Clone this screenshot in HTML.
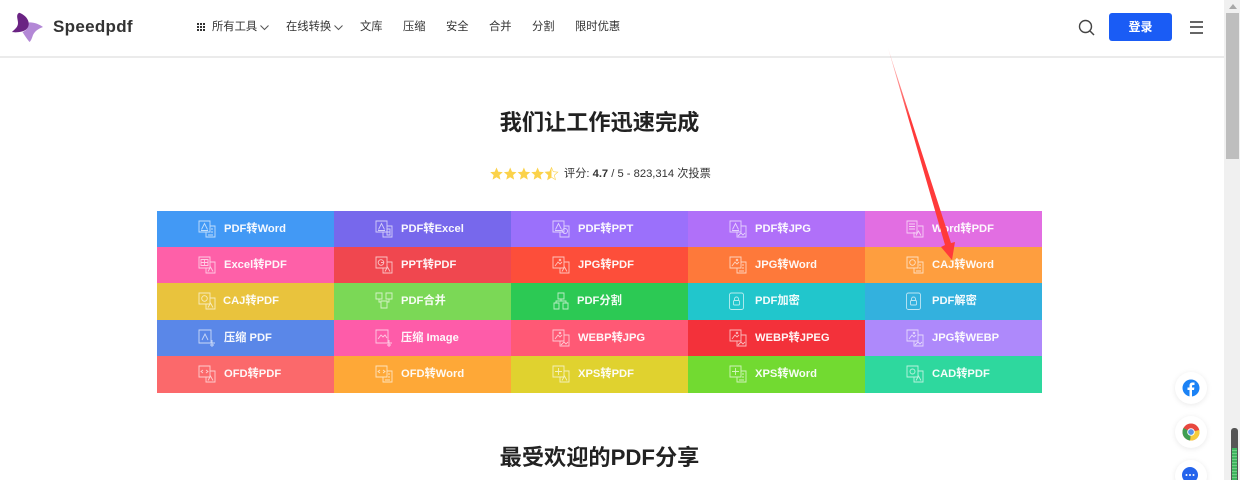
<!DOCTYPE html>
<html lang="zh"><head><meta charset="utf-8"><title>Speedpdf</title>
<style>
html,body{margin:0;padding:0;width:1240px;height:480px;overflow:hidden;background:#fff}
body{position:relative;font-family:"Liberation Sans","Noto Sans CJK SC",sans-serif;color:#333}
.a{position:absolute;white-space:nowrap}
.nav{top:20px;font-size:11.3px;line-height:14px;color:#333}
.c{position:absolute;width:177px;height:37px;color:#fff}
.c span{position:absolute;left:67px;top:11px;font-size:11.2px;font-weight:bold;line-height:15px;white-space:nowrap;opacity:.95}
.c svg{position:absolute;left:41px;top:9px;width:18px;height:18px;fill:none;stroke:#fff;stroke-width:.9;opacity:.68}
h2{position:absolute;margin:0;left:0;width:1199px;text-align:center;font-size:22.2px;font-weight:bold;line-height:32px;color:#222}
.f{position:absolute;left:1175px;width:32px;height:32px;border-radius:50%;background:#fff;box-shadow:0 1px 6px rgba(0,0,0,.09)}
</style></head><body>

<svg class="a" style="left:0;top:0" width="50" height="50" viewBox="0 0 50 50">
<path d="M28.700 22.500C33 22 39 24 43 27C38 29 35 31 33 35C32 38 31 41 29.500 42C27 39 25 36 22.500 32C26 31 28.500 28 28.700 22.500Z" fill="#b388d6"/>
<path d="M19 12.700C24 14 29 19 28.800 24C28.500 28 26 30.500 22 31.500C18 32.500 14 32.500 12 32C15 29 18 27 18 23C18 19 15.500 15 19 12.700Z" fill="#6a2383"/>
</svg>
<div class="a" style="left:53px;top:16px;font-size:17px;line-height:21px;font-weight:bold;color:#333;letter-spacing:.3px">Speedpdf</div>

<svg class="a" style="left:197px;top:23px" width="8" height="8"><path d="M0 0h2v2H0zM3 0h2v2H3zM6 0h2v2H6zM0 3h2v2H0zM3 3h2v2H3zM6 3h2v2H6zM0 6h2v2H0zM3 6h2v2H3zM6 6h2v2H6z" fill="#333"/></svg>
<div class="a nav" style="left:212px">所有工具</div>
<svg class="a" style="left:260px;top:25px" width="9" height="6"><path d="M.5.5L4.500 4.500L8.500.5" fill="none" stroke="#555"/></svg>
<div class="a nav" style="left:286px">在线转换</div>
<svg class="a" style="left:334px;top:25px" width="9" height="6"><path d="M.5.5L4.500 4.500L8.500.5" fill="none" stroke="#555"/></svg>
<div class="a nav" style="left:360px">文库</div>
<div class="a nav" style="left:403px">压缩</div>
<div class="a nav" style="left:446px">安全</div>
<div class="a nav" style="left:489px">合并</div>
<div class="a nav" style="left:532px">分割</div>
<div class="a nav" style="left:575px">限时优惠</div>

<svg class="a" style="left:1078px;top:19px" width="17" height="17" viewBox="0 0 17 17"><circle cx="7.500" cy="7.500" r="6" fill="none" stroke="#444" stroke-width="1.400"/><path d="M12 12L16 16" stroke="#444" stroke-width="1.500"/></svg>
<div class="a" style="left:1109px;top:13px;width:63px;height:28px;background:#1a5cf5;border-radius:3px;color:#fff;font-size:12px;font-weight:bold;line-height:28px;text-align:center">登录</div>
<div class="a" style="left:1190px;top:21px;width:13px;height:1.500px;background:#666"></div>
<div class="a" style="left:1190px;top:26px;width:13px;height:1.500px;background:#666"></div>
<div class="a" style="left:1190px;top:32px;width:13px;height:1.500px;background:#666"></div>
<div class="a" style="left:0;top:56px;width:1224px;height:2px;background:#ebebeb"></div>

<h2 style="top:107px">我们让工作迅速完成</h2>
<svg class="a" style="left:490px;top:167px" width="70" height="14" viewBox="0 0 70 14">
<defs><path id="st" d="M6.500 0.500L8.300 4.700L12.800 5.100L9.400 8.100L10.400 12.600L6.500 10.200L2.600 12.600L3.600 8.100L.2 5.100L4.700 4.700Z"/></defs>
<use href="#st" fill="#fbd24a"/><use href="#st" x="13.700" fill="#fbd24a"/><use href="#st" x="27.400" fill="#fbd24a"/><use href="#st" x="41.100" fill="#fbd24a"/>
<use href="#st" x="55" fill="#fff" stroke="#fbd24a" stroke-width=".6"/>
<path d="M61.500.5L59.700 4.700L55.200 5.100L58.600 8.100L57.600 12.600L61.500 10.200Z" fill="#fbd24a"/>
</svg>
<div class="a" style="left:564px;top:167px;font-size:11.200px;line-height:15px;color:#333">评分: <b>4.7</b> / 5 - 823,314 次投票</div>

<div class="c" style="left:157px;top:211px;background:#4299f5"><svg viewBox="0 0 18 18"><use href="#p"/><use href="#w"/></svg><span>PDF转Word</span></div>
<div class="c" style="left:334px;top:211px;background:#7768ec"><svg viewBox="0 0 18 18"><use href="#p"/><use href="#x"/></svg><span>PDF转Excel</span></div>
<div class="c" style="left:511px;top:211px;background:#9b70fb"><svg viewBox="0 0 18 18"><use href="#p"/><use href="#t"/></svg><span>PDF转PPT</span></div>
<div class="c" style="left:688px;top:211px;background:#b070f9"><svg viewBox="0 0 18 18"><use href="#p"/><use href="#m"/></svg><span>PDF转JPG</span></div>
<div class="c" style="left:865px;top:211px;background:#e26ee2"><svg viewBox="0 0 18 18"><use href="#l"/><use href="#a"/></svg><span>Word转PDF</span></div>

<div class="c" style="left:157px;top:247px;height:36px;background:#fe60a8"><svg viewBox="0 0 18 18"><use href="#b"/><path d="M3 3.500h7v6H3zM3 6.500h7M6.500 3.500v6"/><use href="#a"/></svg><span>Excel转PDF</span></div>
<div class="c" style="left:334px;top:247px;height:36px;background:#f0474f"><svg viewBox="0 0 18 18"><use href="#b"/><circle cx="6" cy="6.500" r="2.800"/><path d="M6 6.500h2.800"/><use href="#a"/></svg><span>PPT转PDF</span></div>
<div class="c" style="left:511px;top:247px;height:36px;background:#fd4e3a"><svg viewBox="0 0 18 18"><use href="#i"/><use href="#a"/></svg><span>JPG转PDF</span></div>
<div class="c" style="left:688px;top:247px;height:36px;background:#fe793a"><svg viewBox="0 0 18 18"><use href="#i"/><use href="#w"/></svg><span>JPG转Word</span></div>
<div class="c" style="left:865px;top:247px;height:36px;background:#fe9e3f"><svg viewBox="0 0 18 18"><use href="#b"/><circle cx="6.500" cy="6.500" r="2.800"/><use href="#w"/></svg><span>CAJ转Word</span></div>

<div class="c" style="left:157px;top:283px;background:#e9c33d"><svg viewBox="0 0 18 18"><use href="#b"/><circle cx="6.500" cy="6.500" r="2.800"/><use href="#a"/></svg><span style="left:66px">CAJ转PDF</span></div>
<div class="c" style="left:334px;top:283px;background:#7bd856"><svg viewBox="0 0 18 18"><path d="M1 1h6v6H1zM11 1h6v6h-6zM4 7v3h2M14 7v3h-2M6 9h6v7H6z"/></svg><span>PDF合并</span></div>
<div class="c" style="left:511px;top:283px;background:#2cc954"><svg viewBox="0 0 18 18"><path d="M6 1h6v6H6zM2 11h5v6H2zM11 11h5v6h-5zM4 11V9h10v2M9 7v2"/></svg><span style="left:66px">PDF分割</span></div>
<div class="c" style="left:688px;top:283px;background:#21c6cc"><svg viewBox="0 0 18 18"><use href="#k"/></svg><span>PDF加密</span></div>
<div class="c" style="left:865px;top:283px;background:#33b1de"><svg viewBox="0 0 18 18"><use href="#k"/></svg><span>PDF解密</span></div>

<div class="c" style="left:157px;top:320px;height:36px;background:#5a87e8"><svg viewBox="0 0 18 18"><path d="M1 1h12v13H1zM4 11l3-6 3 6M14 11v7M11 14h6M12 16h4"/></svg><span>压缩 PDF</span></div>
<div class="c" style="left:334px;top:320px;height:36px;background:#fe5ca9"><svg viewBox="0 0 18 18"><path d="M1 1h12v13H1zM3 10l3-4 2 2 2-2 2 3M14 11v7M11 14h6M12 16h4"/></svg><span>压缩 Image</span></div>
<div class="c" style="left:511px;top:320px;height:36px;background:#ff5975"><svg viewBox="0 0 18 18"><use href="#i"/><use href="#m"/></svg><span>WEBP转JPG</span></div>
<div class="c" style="left:688px;top:320px;height:36px;background:#f3313a"><svg viewBox="0 0 18 18"><use href="#i"/><use href="#m"/></svg><span>WEBP转JPEG</span></div>
<div class="c" style="left:865px;top:320px;height:36px;background:#ae89fb"><svg viewBox="0 0 18 18"><use href="#i"/><use href="#m"/></svg><span>JPG转WEBP</span></div>

<div class="c" style="left:157px;top:356px;background:#fb696b"><svg viewBox="0 0 18 18"><use href="#b"/><path d="M5 5L3 6.500L5 8M8 5L10 6.500L8 8"/><use href="#a"/></svg><span>OFD转PDF</span></div>
<div class="c" style="left:334px;top:356px;background:#fea837"><svg viewBox="0 0 18 18"><use href="#b"/><path d="M5 5L3 6.500L5 8M8 5L10 6.500L8 8"/><use href="#w"/></svg><span>OFD转Word</span></div>
<div class="c" style="left:511px;top:356px;background:#e0d22f"><svg viewBox="0 0 18 18"><use href="#b"/><path d="M6.500 3v7M3 6.500h7"/><use href="#a"/></svg><span>XPS转PDF</span></div>
<div class="c" style="left:688px;top:356px;background:#72da31"><svg viewBox="0 0 18 18"><use href="#b"/><path d="M6.500 3v7M3 6.500h7"/><use href="#w"/></svg><span>XPS转Word</span></div>
<div class="c" style="left:865px;top:356px;background:#2ed89e"><svg viewBox="0 0 18 18"><use href="#b"/><circle cx="6.500" cy="6.500" r="2.500"/><use href="#a"/></svg><span>CAD转PDF</span></div>

<svg width="0" height="0" style="position:absolute"><defs>
<g id="p"><path d="M1 1h11v11H1zM3.500 9.500l3-6 3 6M3 10.500h7"/></g>
<g id="l"><path d="M1 1h10v12H1zM3 4h6M3 6.500h6M3 9h6"/></g>
<g id="b"><path d="M1 1h11v11H1z"/></g>
<g id="i"><path d="M1 1h11v11H1zM3 10l3-4 2 2 2-2"/><circle cx="8" cy="4" r=".8"/></g>
<g id="w"><path d="M8 12v5h9V6h-5M10 15h5M13 9h2M13 12h2"/></g>
<g id="x"><path d="M8 12v5h9V6h-5M12 9h3v6h-3zM12 12h3"/></g>
<g id="t"><path d="M8 12v5h9V6h-5"/><circle cx="13" cy="11" r="2.500"/></g>
<g id="a"><path d="M8 12v5h9V6h-5M10 15.500l2.500-4.500 2.500 4.500"/></g>
<g id="m"><path d="M8 12v5h9V6h-5M9 16l3-3 2 2 2-2"/></g>
<g id="k"><rect x=".5" y="1" width="14" height="16.500" rx="2"/><rect x="4.500" y="8.500" width="6" height="4.500" rx="1"/><path d="M5.500 8.500V7a2 2 0 0 1 4 0v1.500"/></g>
</defs></svg>

<h2 style="top:442px">最受欢迎的PDF分享</h2>

<svg class="a" style="left:0;top:0" width="1240" height="480" viewBox="0 0 1240 480">
<defs><linearGradient id="g" gradientUnits="userSpaceOnUse" x1="888" y1="48" x2="930" y2="190"><stop offset="0" stop-color="#ff3a3a" stop-opacity=".2"/><stop offset=".5" stop-color="#ff3a3a"/></linearGradient></defs>
<path d="M888 48L951 243L955 242L952 260L941 247L945 245Z" fill="url(#g)"/>
</svg>

<div class="f" style="top:372px"><svg style="position:absolute;left:7px;top:7px" width="18" height="18" viewBox="0 0 18 18"><circle cx="9" cy="9" r="8.500" fill="#1b82f5"/><path d="M7.500 18V11H5.500V8.500H7.500V6.500C7.500 4.500 8.800 3.500 10.500 3.500H12.500V6H11C10.300 6 10 6.400 10 7V8.500H12.400L12 11H10V18Z" fill="#fff"/></svg></div>
<div class="f" style="top:416px"><svg style="position:absolute;left:7px;top:7px" width="18" height="18" viewBox="0 0 18 18"><circle cx="9" cy="9" r="8.500" fill="#e8483f"/><path d="M9 9L17.300 7A8.500 8.500 0 0 1 8 17.500Z" fill="#f7cc3c"/><path d="M9 9L8 17.500A8.500 8.500 0 0 1 1.500 5Z" fill="#3f9e51"/><circle cx="9" cy="9" r="3.800" fill="#fff"/><circle cx="9" cy="9" r="2.900" fill="#5a95e6"/></svg></div>
<div class="f" style="top:460px"><svg style="position:absolute;left:7px;top:7px" width="18" height="18" viewBox="0 0 18 18"><circle cx="8" cy="8" r="8" fill="#2363ec"/><circle cx="4.500" cy="8" r="1" fill="#fff"/><circle cx="8" cy="8" r="1" fill="#fff"/><circle cx="11.500" cy="8" r="1" fill="#fff"/></svg></div>

<div class="a" style="left:1224px;top:0;width:16px;height:480px;background:#f0f0f0"></div>
<div class="a" style="left:1226px;top:13px;width:13px;height:146px;background:#bebebe"></div>
<svg class="a" style="left:1229px;top:4px" width="8" height="5"><path d="M0 5L4 0L8 5Z" fill="#a8a8a8"/></svg>
<div class="a" style="left:1231px;top:428px;width:7px;height:52px;background:#555;border-radius:3px 3px 0 0"></div>
<div class="a" style="left:1232px;top:448px;width:5px;height:32px;background:repeating-linear-gradient(#3fb55f 0 2px,#6fcf86 2px 3px)"></div>
</body></html>
